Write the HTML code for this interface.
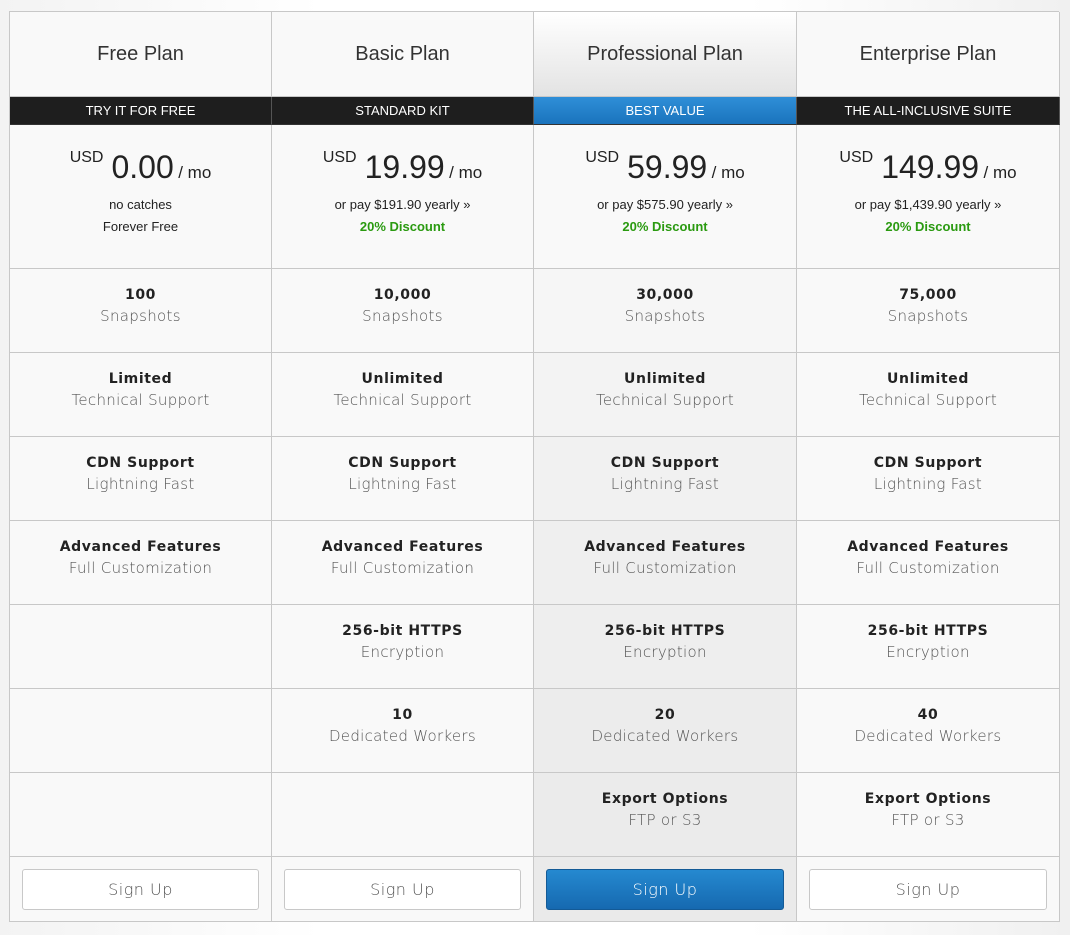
<!DOCTYPE html>
<html><head><meta charset="utf-8"><style>
*{margin:0;padding:0;box-sizing:border-box}
body{width:1070px;height:935px;background:linear-gradient(90deg,#f3f3f3,#fff 30%,#fff 70%,#f0f0f0);font-family:"DejaVu Sans","Liberation Sans",sans-serif;position:relative;overflow:hidden}
.t{position:absolute;left:9px;top:11px;width:1050px;display:grid;grid-template-columns:262px 262px 263px 263px;grid-template-rows:85px 28px 144px repeat(7,84px) 65px;border-left:1px solid #c8c8c8;border-top:1px solid #c8c8c8}
.c{border-right:1px solid #c8c8c8;border-bottom:1px solid #c8c8c8;background:#f9f9f9;text-align:center;color:#222}
.p{background:#efefef}
.h{font-family:"Liberation Sans",sans-serif;font-size:20px;color:#333;padding-top:31px}
.hp{background:linear-gradient(#fff,#e3e3e3)}
.b{background:#1e1e1e;color:#fff;font-family:"Liberation Sans",sans-serif;font-size:13px;line-height:27px;border-right:1px solid #555;border-bottom:1px solid #333}
.bp{background:linear-gradient(#2f8fd8,#1a73bd)}
.pr{font-family:"Liberation Sans",sans-serif;padding-top:22px}
.pr .m{position:relative;height:42px}
.pr .u{font-size:16px;vertical-align:top;position:relative;top:2px;margin-right:8px}
.pr .n{font-size:32px;line-height:40px}
.pr .mo{font-size:17px}
.pr .s{font-size:13px;line-height:22px;margin-top:5px}
.g{color:#2a9a10;font-weight:bold}
.f{padding-top:17px}
.f b{display:block;font-size:14px;letter-spacing:0.6px;line-height:18px}
.f span{display:block;font-size:15px;color:#555;line-height:24px;font-weight:300;letter-spacing:0.3px}
.bt{padding-top:12px}
.bt div{margin:0 12px;height:41px;border:1px solid #c8c8c8;border-radius:3px;background:#fff;font-size:16px;line-height:39px;color:#555;font-weight:300;letter-spacing:0.5px}
.bt div.bl{background:linear-gradient(#2589d0,#1669b0);border-color:#135a96;color:#fff}
</style></head><body>
<div class="t">
<div class="c h">Free Plan</div><div class="c h">Basic Plan</div><div class="c h hp">Professional Plan</div><div class="c h">Enterprise Plan</div>
<div class="c b">TRY IT FOR FREE</div><div class="c b">STANDARD KIT</div><div class="c b bp">BEST VALUE</div><div class="c b">THE ALL-INCLUSIVE SUITE</div>
<div class="c pr"><div class="m"><span class="u">USD</span><span class="n">0.00</span> <span class="mo">/ mo</span></div><div class="s">no catches<br>Forever Free</div></div>
<div class="c pr"><div class="m"><span class="u">USD</span><span class="n">19.99</span> <span class="mo">/ mo</span></div><div class="s">or pay $191.90 yearly »<br><span class="g">20% Discount</span></div></div>
<div class="c pr"><div class="m"><span class="u">USD</span><span class="n">59.99</span> <span class="mo">/ mo</span></div><div class="s">or pay $575.90 yearly »<br><span class="g">20% Discount</span></div></div>
<div class="c pr"><div class="m"><span class="u">USD</span><span class="n">149.99</span> <span class="mo">/ mo</span></div><div class="s">or pay $1,439.90 yearly »<br><span class="g">20% Discount</span></div></div>
<div class="c f"><b>100</b><span>Snapshots</span></div><div class="c f"><b>10,000</b><span>Snapshots</span></div><div class="c f p" style="background:#f6f6f6"><b>30,000</b><span>Snapshots</span></div><div class="c f"><b>75,000</b><span>Snapshots</span></div>
<div class="c f"><b>Limited</b><span>Technical Support</span></div><div class="c f"><b>Unlimited</b><span>Technical Support</span></div><div class="c f p" style="background:#f3f3f3"><b>Unlimited</b><span>Technical Support</span></div><div class="c f"><b>Unlimited</b><span>Technical Support</span></div>
<div class="c f"><b>CDN Support</b><span>Lightning Fast</span></div><div class="c f"><b>CDN Support</b><span>Lightning Fast</span></div><div class="c f p" style="background:#f1f1f1"><b>CDN Support</b><span>Lightning Fast</span></div><div class="c f"><b>CDN Support</b><span>Lightning Fast</span></div>
<div class="c f"><b>Advanced Features</b><span>Full Customization</span></div><div class="c f"><b>Advanced Features</b><span>Full Customization</span></div><div class="c f p"><b>Advanced Features</b><span>Full Customization</span></div><div class="c f"><b>Advanced Features</b><span>Full Customization</span></div>
<div class="c f"></div><div class="c f"><b>256-bit HTTPS</b><span>Encryption</span></div><div class="c f p" style="background:#eeeeee"><b>256-bit HTTPS</b><span>Encryption</span></div><div class="c f"><b>256-bit HTTPS</b><span>Encryption</span></div>
<div class="c f"></div><div class="c f"><b>10</b><span>Dedicated Workers</span></div><div class="c f p" style="background:#ececec"><b>20</b><span>Dedicated Workers</span></div><div class="c f"><b>40</b><span>Dedicated Workers</span></div>
<div class="c f"></div><div class="c f"></div><div class="c f p" style="background:#ebebeb"><b>Export Options</b><span>FTP or S3</span></div><div class="c f"><b>Export Options</b><span>FTP or S3</span></div>
<div class="c bt"><div>Sign Up</div></div><div class="c bt"><div>Sign Up</div></div><div class="c bt p" style="background:#eaeaea"><div class="bl">Sign Up</div></div><div class="c bt"><div>Sign Up</div></div>
</div>
</body></html>
